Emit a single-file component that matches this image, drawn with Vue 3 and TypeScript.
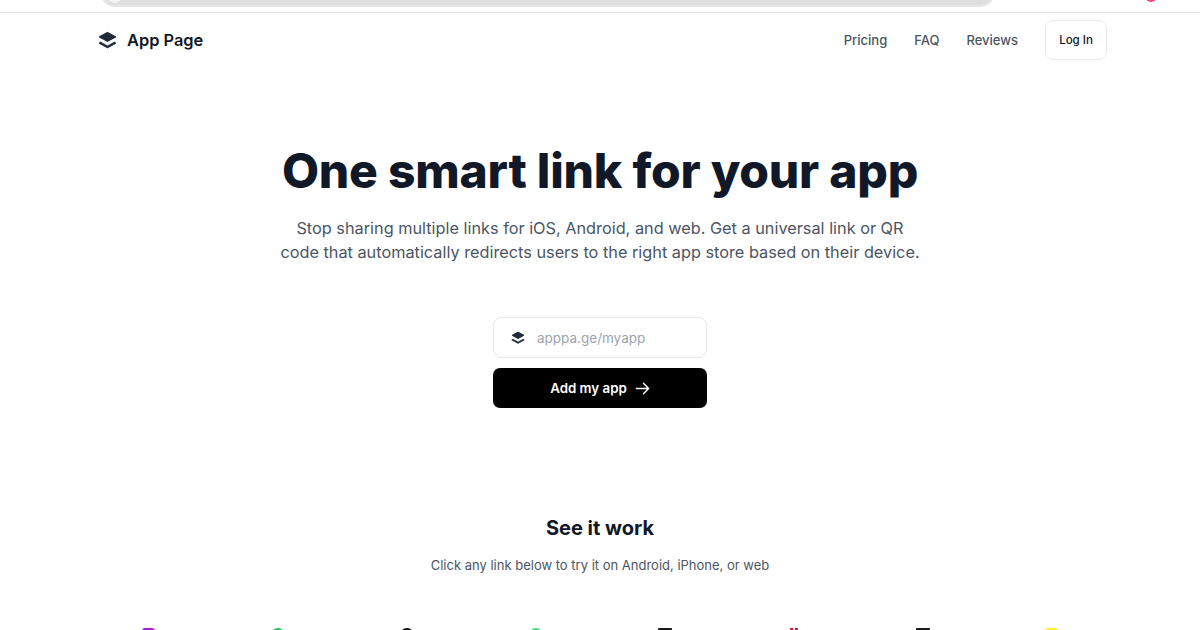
<template>
  <div class="page">
    <div class="strip">
      <div class="strip-bar"><span class="strip-knob"></span></div>
      <span class="strip-dot"></span>
    </div>

    <header class="nav">
      <a class="brand">
        <svg class="layers" viewBox="0 0 20 20" width="19" height="19">
          <path d="M10 1.6 18.4 6.2 10 10.8 1.6 6.2Z" fill="#1f2937" stroke="#1f2937" stroke-width="1.4" stroke-linejoin="round" />
          <path d="M2.6 10.2 10 14.3 17.4 10.2 19 11.5 10 16.4 1 11.5Z" transform="translate(0 1.4)" fill="#1f2937" stroke="#1f2937" stroke-width=".8" stroke-linejoin="round" />
        </svg>
        <span>App Page</span>
      </a>
      <nav class="links">
        <a v-for="link in links" :key="link">{{ link }}</a>
        <button class="login">Log In</button>
      </nav>
    </header>

    <section class="hero">
      <h1>One smart link for your app</h1>
      <p class="lead">
        Stop sharing multiple links for iOS, Android, and web. Get a universal link or QR<br />
        code that automatically redirects users to the right app store based on their device.
      </p>
      <div class="form">
        <label class="field">
          <svg class="layers" viewBox="0 0 20 20" width="14" height="14">
            <path d="M10 1.6 18.4 6.2 10 10.8 1.6 6.2Z" fill="#1f2937" stroke="#1f2937" stroke-width="1.4" stroke-linejoin="round" />
            <path d="M2.6 10.2 10 14.3 17.4 10.2 19 11.5 10 16.4 1 11.5Z" transform="translate(0 1.4)" fill="#1f2937" stroke="#1f2937" stroke-width=".8" stroke-linejoin="round" />
          </svg>
          <input placeholder="apppa.ge/myapp" />
        </label>
        <button class="add">
          Add my app
          <svg viewBox="0 0 16 16" width="15" height="15" fill="none" stroke="#fff" stroke-width="1.6" stroke-linecap="round" stroke-linejoin="round">
            <path d="M1.5 8h13M9 2.5 14.5 8 9 13.5" />
          </svg>
        </button>
      </div>
    </section>

    <section class="demo">
      <h2>See it work</h2>
      <p>Click any link below to try it on Android, iPhone, or web</p>
      <div class="apps">
        <span v-for="(app, i) in apps" :key="i" :class="['app', app.shape]" :style="{ background: app.fill }"></span>
      </div>
    </section>
  </div>
</template>

<script setup lang="ts">
const links = ['Pricing', 'FAQ', 'Reviews']

const apps = [
  { fill: 'linear-gradient(90deg, #7c1fd6, #e01fd0)', shape: 'square' },
  { fill: '#22c55e', shape: 'round' },
  { fill: '#111111', shape: 'round' },
  { fill: '#4ade80', shape: 'round' },
  { fill: '#1a1a1a', shape: 'flat' },
  { fill: 'linear-gradient(90deg, #d3122f 40%, #fff 40% 60%, #d3122f 60%)', shape: 'notch' },
  { fill: '#1a1a1a', shape: 'flat' },
  { fill: '#fdf02f', shape: 'square' }
]
</script>

<style>
html,
body {
  margin: 0;
  background: #fff;
  overflow: hidden;
}
</style>

<style scoped>
.page {
  width: 1200px;
  height: 630px;
  overflow: hidden;
  font-family: Inter, "Liberation Sans", sans-serif;
  color: #111827;
}

.strip {
  position: relative;
  height: 12px;
  border-bottom: 1px solid #e2e2e2;
  overflow: hidden;
}

.strip-bar {
  position: absolute;
  left: 100px;
  bottom: 5px;
  width: 895px;
  height: 30px;
  background: #dfdfdf;
  border-radius: 15px;
  box-sizing: border-box;
  border: 2px solid #e6e6e6;
}

.strip-knob {
  position: absolute;
  left: 6px;
  bottom: 2px;
  width: 14px;
  height: 14px;
  border-radius: 50%;
  background: #f4f4f4;
}

.strip-dot {
  position: absolute;
  left: 1145px;
  bottom: 10px;
  width: 12px;
  height: 12px;
  border-radius: 50%;
  background: #ec4c78;
}

.nav {
  display: flex;
  align-items: center;
  justify-content: space-between;
  height: 54px;
  padding: 0 93px 0 98px;
}

.brand {
  display: flex;
  align-items: center;
  gap: 10px;
  font-size: 16.4px;
  font-weight: 600;
}

.links {
  display: flex;
  align-items: center;
  gap: 27px;
  font-size: 13px;
  font-weight: 500;
  color: #4b5563;
}

.login {
  width: 62px;
  height: 40px;
  padding: 0;
  font: 500 11.5px Inter, "Liberation Sans", sans-serif;
  color: #111827;
  background: #fff;
  border: 1px solid #e9eaee;
  border-radius: 8px;
}

.hero {
  display: flex;
  flex-direction: column;
  align-items: center;
  padding-top: 74px;
}

h1 {
  margin: 0;
  font-size: 48px;
  line-height: 60px;
  font-weight: 800;
  letter-spacing: -0.22px;
  color: #111827;
}

.lead {
  margin: 15px 0 0;
  font-size: 16.3px;
  line-height: 24px;
  text-align: center;
  color: #4b5563;
}

.form {
  display: flex;
  flex-direction: column;
  gap: 10px;
  width: 214px;
  margin-top: 53px;
}

.field {
  display: flex;
  align-items: center;
  gap: 12px;
  height: 41px;
  padding: 0 17px;
  box-sizing: border-box;
  border: 1px solid #e9eaee;
  border-radius: 8px;
}

.field input {
  flex: 1;
  min-width: 0;
  padding: 0;
  border: 0;
  outline: 0;
  font: 400 13.5px Inter, "Liberation Sans", sans-serif;
}

.field input::placeholder {
  color: #9ca3af;
}

.add {
  display: flex;
  align-items: center;
  justify-content: center;
  gap: 8px;
  height: 40px;
  padding: 0;
  font: 600 13.3px Inter, "Liberation Sans", sans-serif;
  color: #fff;
  background: #000;
  border: 0;
  border-radius: 7px;
}

.demo {
  margin-top: 106px;
  text-align: center;
}

h2 {
  margin: 0;
  font-size: 20px;
  line-height: 28px;
  font-weight: 700;
}

.demo p {
  margin: 13px 0 0;
  font-size: 13px;
  line-height: 20px;
  color: #4b5563;
}

.apps {
  display: grid;
  grid-template-columns: repeat(8, 129px);
  justify-content: center;
  justify-items: center;
  margin-top: 53px;
}

.app {
  display: block;
  width: 13px;
  height: 14px;
}

.square {
  border-radius: 3px 3px 0 0;
}

.round {
  width: 14px;
  border-radius: 50%;
}

.flat {
  width: 14px;
  border-radius: 1px;
}

.notch {
  width: 8px;
  border-radius: 1px;
}
</style>
